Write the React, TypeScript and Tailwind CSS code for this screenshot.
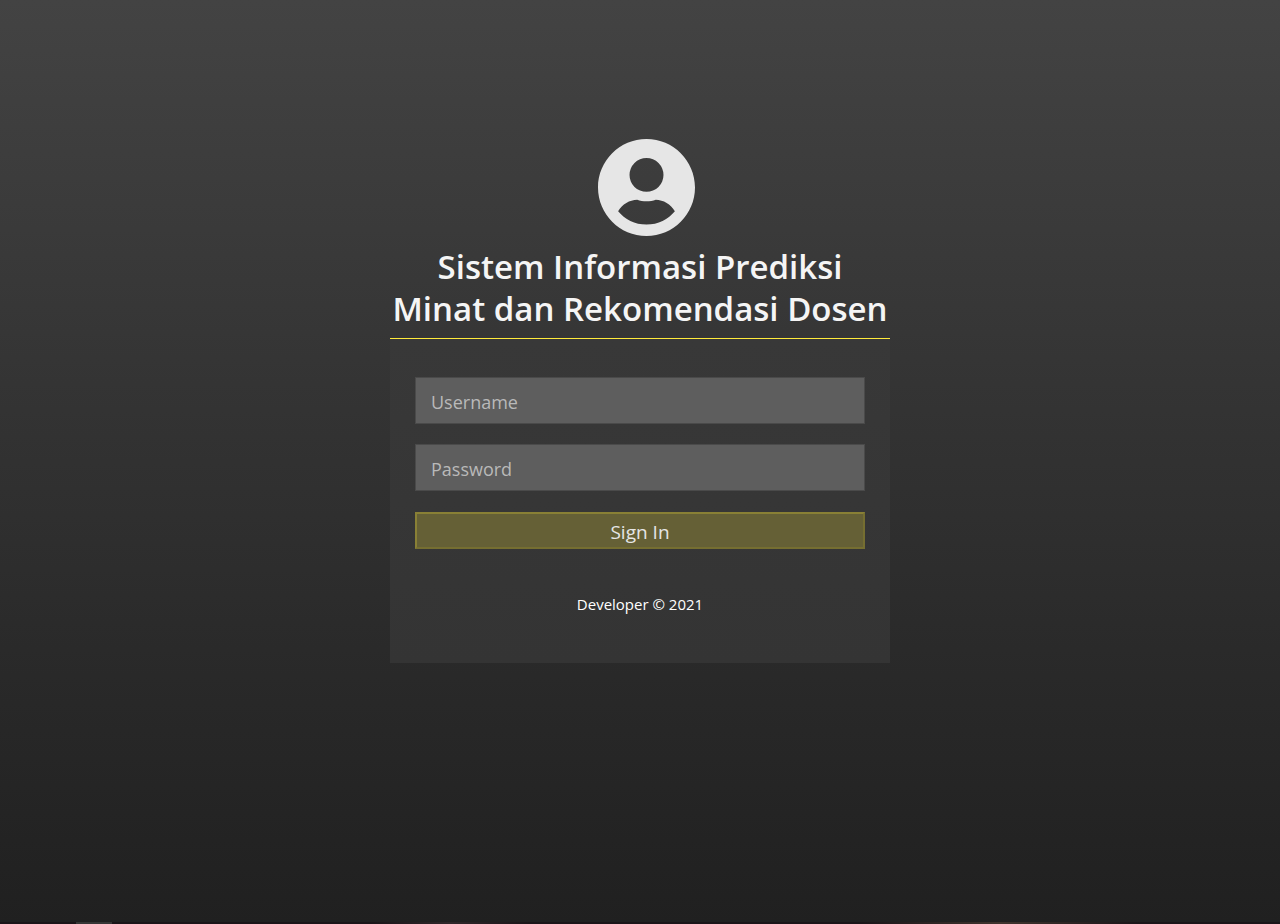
const fieldClass =
  "block h-[47px] w-full border border-[#4a4a4a] bg-[#5e5e5e] px-[15px] pt-0.5 text-[18px] outline-none placeholder:text-[#b9b9b9]";

export default function App() {
  return (
    <div className="flex min-h-screen flex-col bg-linear-to-b from-[#434343] to-[#202020] font-['Open_Sans','Noto_Sans',sans-serif] text-white">
      <main className="mx-auto w-full max-w-[500px] pt-[139px]">
        <svg viewBox="2 2 20 20" className="mx-auto size-[97px] translate-x-1.5 fill-[#e6e6e6]" aria-hidden="true">
          <path d="M12 2C6.48 2 2 6.48 2 12s4.48 10 10 10 10-4.48 10-10S17.52 2 12 2zm0 3.9a3.5 3.5 0 1 1 0 7 3.5 3.5 0 0 1 0-7zm0 13.75c-2.4 0-4.5-1.1-5.85-2.75.85-1.5 2.35-2.35 3.95-2.4 1.1.42 2.7.42 3.8 0 1.6.05 3.1.9 3.95 2.4-1.35 1.65-3.45 2.75-5.85 2.75z" />
        </svg>
        <h1 className="mt-2.5 text-center text-[33px] leading-[42px] font-semibold text-[#f5f5f5]">
          Sistem Informasi Prediksi
          <br />
          Minat dan Rekomendasi Dosen
        </h1>
        <div className="mt-2 h-px bg-[#ffeb3b]" />
        <form
          className="bg-linear-to-b from-[#383838] to-[#343434] px-[25px] pt-[38px] pb-[47px]"
          onSubmit={(e) => e.preventDefault()}
        >
          <input aria-label="Username" placeholder="Username" className={fieldClass} />
          <input aria-label="Password" type="password" placeholder="Password" className={"mt-5 " + fieldClass} />
          <button className="mt-[21px] block h-[37px] w-full border-2 border-t-[#898035] border-r-[#756e31] border-b-[#756e31] border-l-[#898035] bg-[#656036] pt-0.5 text-[19px] leading-7 text-[#e6e6e6]">
            Sign In
          </button>
          <p className="mt-[43px] text-center text-[15px] leading-6">Developer © 2021</p>
        </form>
      </main>
      <footer className="mt-auto flex h-0.5 bg-[#1b1519]">
        <span className="ml-[76px] w-9 bg-[#363636]" />
        <span className="ml-[258px] w-[160px] bg-linear-to-r from-[#1b1519] via-[#30272a] to-[#1b1519]" />
        <span className="ml-auto w-[280px] bg-linear-to-r from-[#1b1519] via-[#40342e] to-[#1b1519]" />
        <span className="w-[140px]" />
      </footer>
    </div>
  );
}
